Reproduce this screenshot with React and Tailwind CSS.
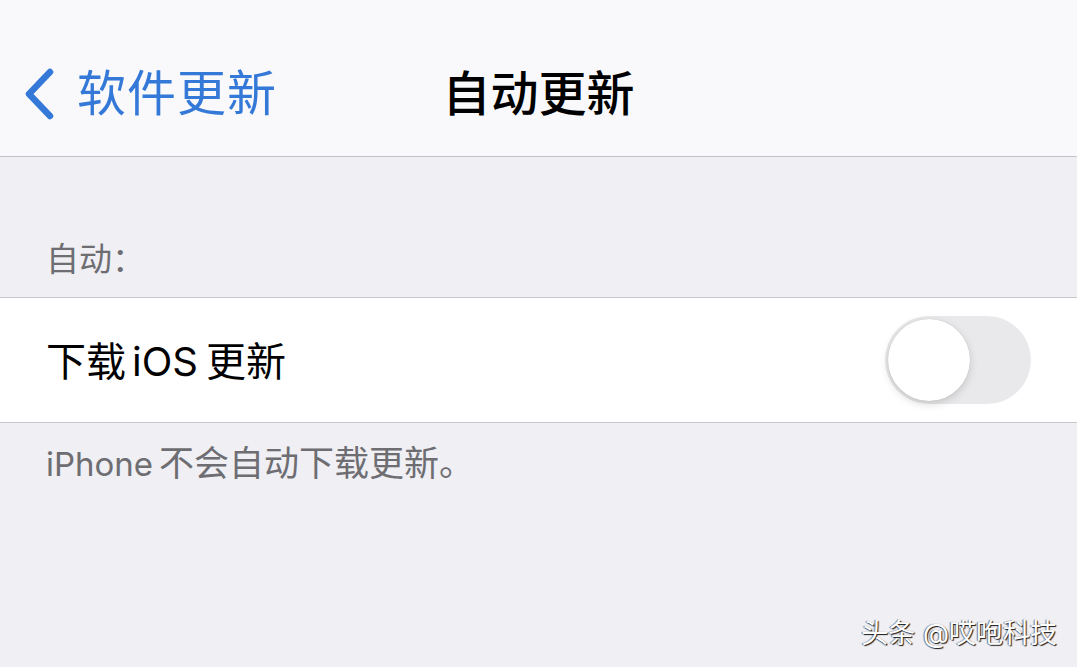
import React from "react";

const font = { fontFamily: '"Inter", "Noto Sans CJK SC", sans-serif' };

const BackChevron = () => (
    <svg width="34" height="52" viewBox="0 0 34 52" className="shrink-0">
        <path
            d="M28 4 L7 26 L28 48"
            fill="none"
            stroke="#3478d8"
            strokeWidth="6.5"
            strokeLinecap="round"
            strokeLinejoin="round"
        />
    </svg>
);

const Toggle = () => (
    <div className="relative w-[146px] h-[88px] rounded-full bg-[#e9e9eb]">
        <div className="absolute left-[3px] top-[3px] w-[82px] h-[82px] rounded-full bg-white shadow-[0_3px_8px_rgba(0,0,0,0.15),0_0_1px_rgba(0,0,0,0.2)]" />
    </div>
);

export default function App() {
    return (
        <div
            className="relative w-[1077px] h-[667px] bg-[#efeff4] overflow-hidden"
            style={font}
        >
            <div className="h-[157px] bg-[#f9f9fb] border-b border-[#c4c4c6] grid grid-cols-[1fr_auto_1fr] items-center pt-[32px]">
                <div className="flex items-center pl-[22px] gap-[21px] text-[#3478d8]">
                    <BackChevron />
                    <span className="text-[49px] leading-[56px] tracking-[1px]">软件更新</span>
                </div>
                <h1 className="text-[48px] leading-[56px] font-medium text-black">
                    自动更新
                </h1>
                <div />
            </div>

            <div className="h-[141px] flex items-end pb-[18px] px-[46px] border-b border-[#c8c7cc]">
                <span className="text-[33px] leading-[40px] text-[#6d6d72]">自动：</span>
            </div>

            <div className="h-[125px] bg-white border-b border-[#c8c7cc] flex items-center justify-between pl-[46px] pr-[46px]">
                <span className="text-[40px] leading-[48px] text-black pt-[4px]">
                    下载<span className="ml-[6px]">iOS</span>
                    <span className="ml-[8px]">更新</span>
                </span>
                <Toggle />
            </div>

            <div className="pt-[20px] px-[46px]">
                <p className="text-[33px] leading-[40px] text-[#6d6d72]">
                    iPhone<span className="ml-[6px] text-[35px]">不会自动下载更新。</span>
                </p>
            </div>

            <div className="absolute right-[20px] bottom-[16px] text-[27px] leading-[34px] text-white [text-shadow:1px_1px_1px_rgba(0,0,0,0.9),-1px_0_1px_rgba(0,0,0,0.5)]">
                头条 @哎咆科技
            </div>
        </div>
    );
}
